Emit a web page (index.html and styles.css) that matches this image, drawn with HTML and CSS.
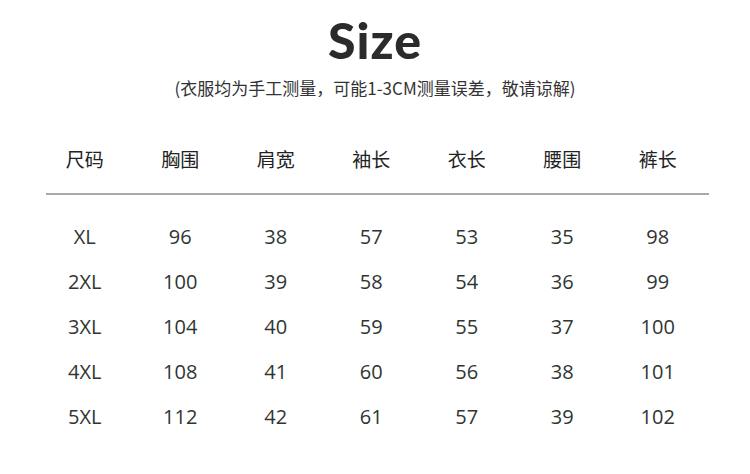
FILE: index.html
```html
<!DOCTYPE html>
<html lang="zh">
<head>
<meta charset="utf-8">
<link rel="stylesheet" href="styles.css">
</head>
<body>
<div class="page">
  <h1 class="title">Size</h1>
  <p class="note">(衣服均为手工测量，可能1-3CM测量误差，敬请谅解)</p>
  <div class="table">
    <div class="row head">
      <span>尺码</span><span>胸围</span><span>肩宽</span><span>袖长</span><span>衣长</span><span>腰围</span><span>裤长</span>
    </div>
    <div class="rule"></div>
    <div class="body">
      <div class="row"><span>XL</span><span>96</span><span>38</span><span>57</span><span>53</span><span>35</span><span>98</span></div>
      <div class="row"><span>2XL</span><span>100</span><span>39</span><span>58</span><span>54</span><span>36</span><span>99</span></div>
      <div class="row"><span>3XL</span><span>104</span><span>40</span><span>59</span><span>55</span><span>37</span><span>100</span></div>
      <div class="row"><span>4XL</span><span>108</span><span>41</span><span>60</span><span>56</span><span>38</span><span>101</span></div>
      <div class="row"><span>5XL</span><span>112</span><span>42</span><span>61</span><span>57</span><span>39</span><span>102</span></div>
    </div>
  </div>
</div>
</body>
</html>
```

FILE: styles.css
```css
html, body {
  margin: 0;
  padding: 0;
  background: #ffffff;
}

.page {
  width: 750px;
  height: 474px;
  overflow: hidden;
  display: flex;
  flex-direction: column;
  align-items: center;
  font-family: "Noto Sans CJK SC", "Noto Sans", sans-serif;
  color: #2e2e2e;
}

.title {
  margin: 15px 0 0 0;
  font-family: Lato, "Open Sans", sans-serif;
  font-weight: 900;
  font-size: 50px;
  line-height: 50px;
  color: #2b2b2b;
  letter-spacing: 1px;
}

.note {
  margin: 11px 0 0 0;
  font-size: 17px;
  line-height: 24px;
  color: #333333;
}

.table {
  width: 750px;
  display: flex;
  flex-direction: column;
}

.row {
  display: grid;
  grid-template-columns: repeat(7, 95.5px);
  padding-left: 37px;
}

.row span {
  text-align: center;
}

.head {
  margin-top: 46px;
  font-size: 19px;
  line-height: 26px;
  color: #222222;
}

.rule {
  margin: 21px 0 0 46px;
  width: 663px;
  height: 2px;
  background: #a9a9a9;
}

.body {
  margin-top: 19px;
  font-family: "Open Sans", "Noto Sans", sans-serif;
  font-size: 20px;
  color: #2f3632;
}

.body .row {
  height: 45px;
  line-height: 45px;
}
```
